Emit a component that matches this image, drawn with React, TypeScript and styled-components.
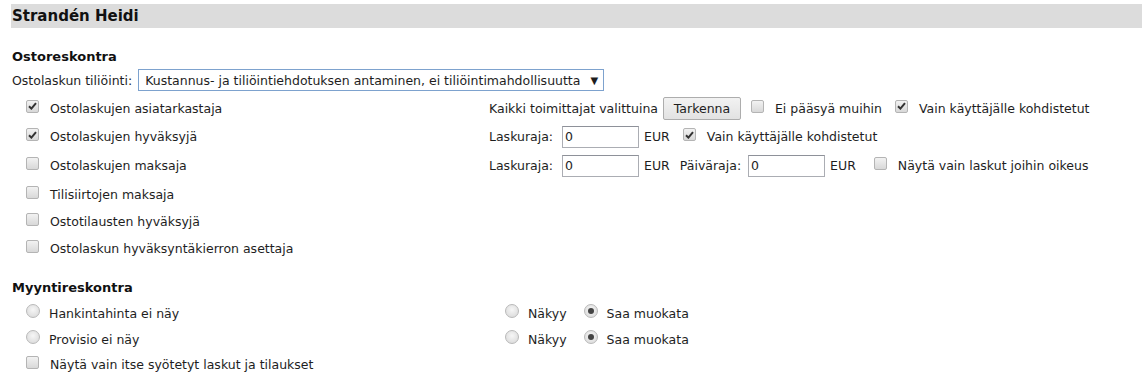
import styled, { createGlobalStyle } from 'styled-components'

const GlobalStyle = createGlobalStyle`
    body {
        margin: 0;
        background: #fff;
        font-family: "DejaVu Sans", Verdana, sans-serif;
        font-size: 12.5px;
        color: #1e1e1e;
    }
`

const Page = styled.div`
    padding: 4px 1px 0 11px;
`

const NameBar = styled.h1`
    margin: 0;
    height: 24px;
    display: flex;
    align-items: center;
    padding-left: 1px;
    background: #dcdcdc;
    font-size: 15px;
    font-weight: bold;
    color: #111;
`

const Section = styled.section<{ $top: number }>`
    margin-top: ${({ $top }) => $top}px;
    padding-left: 1px;
`

const SectionTitle = styled.h2`
    margin: 0;
    height: 16px;
    line-height: 16px;
    font-size: 13px;
    font-weight: bold;
    color: #111;
`

const SelectRow = styled.div`
    display: flex;
    align-items: center;
    gap: 6px;
    height: 24px;
    margin-top: 3px;
    white-space: nowrap;
`

const FakeSelect = styled.div`
    box-sizing: border-box;
    width: 466px;
    height: 22px;
    border: 1px solid #7da2ce;
    display: flex;
    align-items: center;
    justify-content: space-between;
    padding: 0 5px 0 6px;
    background: #fff;
`

const Arrow = styled.span`
    font-size: 10px;
`

const Grid = styled.div<{ $top: number }>`
    display: grid;
    grid-template-columns: 463px 1fr;
    padding-left: 14px;
    margin-top: ${({ $top }) => $top}px;
`

const Row = styled.div<{ $h: number }>`
    display: flex;
    align-items: center;
    height: ${({ $h }) => $h}px;
    white-space: nowrap;
`

const Label = styled.span<{ $ml?: number }>`
    margin-left: ${({ $ml }) => $ml ?? 0}px;
`

const Box = styled.span<{ $ml?: number }>`
    box-sizing: border-box;
    width: 13px;
    height: 13px;
    flex: none;
    margin-left: ${({ $ml }) => $ml ?? 0}px;
    margin-right: 11px;
    margin-top: -4px;
    border: 1px solid #b4b4b4;
    border-radius: 2px;
    background: linear-gradient(#f2f2f2, #d8d8d8);
    display: flex;
    align-items: center;
    justify-content: center;
`

const Radio = styled.span<{ $checked?: boolean; $ml?: number }>`
    box-sizing: border-box;
    width: 14px;
    height: 14px;
    flex: none;
    margin-left: ${({ $ml }) => $ml ?? 0}px;
    margin-right: 9px;
    margin-top: -4px;
    border: 1px solid #b9b9b9;
    border-radius: 50%;
    background: radial-gradient(circle at 50% 40%, #f6f6f6, #d6d6d6);
    display: flex;
    align-items: center;
    justify-content: center;

    &::after {
        content: '';
        display: ${({ $checked }) => ($checked ? 'block' : 'none')};
        width: 6px;
        height: 6px;
        border-radius: 50%;
        background: #444;
    }
`

const Button = styled.span`
    box-sizing: border-box;
    height: 23px;
    width: 78px;
    margin-left: 5px;
    display: flex;
    align-items: center;
    justify-content: center;
    border: 1px solid #adadad;
    border-radius: 2px;
    background: linear-gradient(#f2f2f2, #e2e2e2);
`

const TextInput = styled.span<{ $ml?: number }>`
    box-sizing: border-box;
    width: 77px;
    height: 22px;
    margin-left: ${({ $ml }) => $ml ?? 4}px;
    margin-right: 5px;
    border: 1px solid #abadb3;
    border-top-color: #8e9199;
    padding-left: 2px;
    display: flex;
    align-items: center;
    background: #fff;
`

function Check({ checked, ml }: { checked?: boolean; ml?: number }) {
    return (
        <Box $ml={ml}>
            {checked && (
                <svg width="9" height="8" viewBox="0 0 9 8">
                    <path d="M1 4.2 L3.4 6.6 L8 1.2" stroke="#333" strokeWidth="2" fill="none" />
                </svg>
            )}
        </Box>
    )
}

const purchaseRights = [
    { text: 'Ostolaskujen asiatarkastaja', checked: true },
    { text: 'Ostolaskujen hyväksyjä', checked: true },
    { text: 'Ostolaskujen maksaja', checked: false },
    { text: 'Tilisiirtojen maksaja', checked: false },
    { text: 'Ostotilausten hyväksyjä', checked: false },
    { text: 'Ostolaskun hyväksyntäkierron asettaja', checked: false },
]

const rowHeights = [28, 29, 29, 28, 27, 27]

function PriceRights({ label }: { label: string }) {
    return (
        <>
            <Row $h={26}>
                <Radio />
                <Label>{label}</Label>
            </Row>
            <Row $h={26}>
                <Radio $ml={16} />
                <Label>Näkyy</Label>
                <Radio $checked $ml={17} />
                <Label>Saa muokata</Label>
            </Row>
        </>
    )
}

export default function App() {
    const rightColumn = [
        <Row $h={rowHeights[0]} key="r0">
            <Label>Kaikki toimittajat valittuina</Label>
            <Button>Tarkenna</Button>
            <Check ml={10} />
            <Label>Ei pääsyä muihin</Label>
            <Check checked ml={13} />
            <Label>Vain käyttäjälle kohdistetut</Label>
        </Row>,
        <Row $h={rowHeights[1]} key="r1">
            <Label>Laskuraja:</Label>
            <TextInput $ml={9}>0</TextInput>
            <Label>EUR</Label>
            <Check checked ml={13} />
            <Label>Vain käyttäjälle kohdistetut</Label>
        </Row>,
        <Row $h={rowHeights[2]} key="r2">
            <Label>Laskuraja:</Label>
            <TextInput $ml={9}>0</TextInput>
            <Label>EUR</Label>
            <Label $ml={10}>Päiväraja:</Label>
            <TextInput $ml={7}>0</TextInput>
            <Label>EUR</Label>
            <Check ml={18} />
            <Label>Näytä vain laskut joihin oikeus</Label>
        </Row>,
    ]

    return (
        <>
            <GlobalStyle />
            <Page>
                <NameBar>Strandén Heidi</NameBar>
                <Section $top={21}>
                    <SectionTitle>Ostoreskontra</SectionTitle>
                    <SelectRow>
                        <span>Ostolaskun tiliöinti:</span>
                        <FakeSelect>
                            <span>Kustannus- ja tiliöintiehdotuksen antaminen, ei tiliöintimahdollisuutta</span>
                            <Arrow>▼</Arrow>
                        </FakeSelect>
                    </SelectRow>
                    <Grid $top={2}>
                        {purchaseRights.flatMap((item, i) => [
                            <Row $h={rowHeights[i]} key={item.text}>
                                <Check checked={item.checked} />
                                <Label>{item.text}</Label>
                            </Row>,
                            rightColumn[i] ?? <div key={'e' + i} />,
                        ])}
                    </Grid>
                </Section>
                <Section $top={18}>
                    <SectionTitle>Myyntireskontra</SectionTitle>
                    <Grid $top={4}>
                        <PriceRights label="Hankintahinta ei näy" />
                        <PriceRights label="Provisio ei näy" />
                        <Row $h={25}>
                            <Check />
                            <Label>Näytä vain itse syötetyt laskut ja tilaukset</Label>
                        </Row>
                    </Grid>
                </Section>
            </Page>
        </>
    )
}
